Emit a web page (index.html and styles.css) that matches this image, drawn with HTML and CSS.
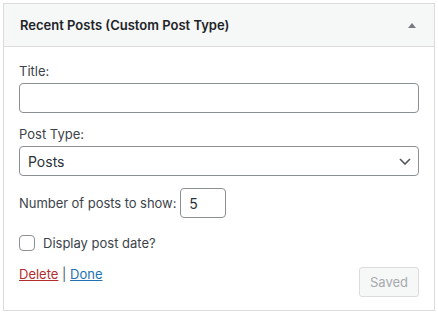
FILE: index.html
```html
<!DOCTYPE html>
<html lang="en">
<head>
    <meta charset="UTF-8">
    <meta name="viewport" content="width=device-width, initial-scale=1.0">
    <title>Recent Posts widget</title>
    <link rel="stylesheet" href="styles.css">
</head>
<body>
    <div class="widget">
        <div class="widget-top">
            <h3 class="widget-title">Recent Posts (Custom Post Type)</h3>
            <button class="widget-toggle" aria-label="Collapse">
                <svg width="8" height="5" viewBox="0 0 8 5"><polygon points="4,0 8,5 0,5" fill="#787c82"/></svg>
            </button>
        </div>

        <div class="widget-inside">
            <div class="field">
                <label for="title">Title:</label>
                <input type="text" id="title" class="text-input">
            </div>

            <div class="field">
                <label for="post-type">Post Type:</label>
                <div class="select-wrap">
                    <select id="post-type" class="select-input">
                        <option>Posts</option>
                        <option>Pages</option>
                    </select>
                    <svg class="chevron" width="12" height="7" viewBox="0 0 12 7"><polyline points="1,1 6,6 11,1" fill="none" stroke="#50575e" stroke-width="1.6"/></svg>
                </div>
            </div>

            <div class="field field-inline">
                <label for="number">Number of posts to show:</label>
                <input type="text" id="number" class="text-input small" value="5">
            </div>

            <div class="field field-check">
                <input type="checkbox" id="show-date" class="checkbox">
                <label for="show-date">Display post date?</label>
            </div>

            <div class="widget-actions">
                <div class="links">
                    <a href="#" class="delete">Delete</a> | <a href="#" class="done">Done</a>
                </div>
                <button class="button" disabled>Saved</button>
            </div>
        </div>
    </div>
</body>
</html>
```

FILE: styles.css
```css
body {
    margin: 0;
    padding: 3px;
    background: #fff;
    font-family: Inter, "Liberation Sans", sans-serif;
    font-size: 13px;
    color: #3c434a;
}

.widget {
    width: 432px;
    box-sizing: border-box;
    border: 1px solid #dcdcde;
    background: #fff;
}

.widget-top {
    height: 42px;
    background: #f6f7f7;
    border-bottom: 1px solid #dcdcde;
    display: flex;
    align-items: center;
    justify-content: space-between;
    padding: 0 15px 0 16px;
}

.widget-title {
    margin: 0;
    font-size: 13px;
    font-weight: 600;
    color: #1d2327;
    line-height: 1;
}

.widget-toggle {
    background: none;
    border: none;
    padding: 0;
    width: 12px;
    height: 12px;
    display: flex;
    align-items: center;
    justify-content: center;
    margin-right: 1px;
}

.widget-inside {
    padding: 15px 15px 13px;
}

.field {
    margin-bottom: 12px;
}

.field label {
    display: block;
    line-height: 18px;
    margin-bottom: 3px;
}

.text-input,
.select-input {
    display: block;
    width: 100%;
    height: 30px;
    box-sizing: border-box;
    border: 1px solid #8c8f94;
    border-radius: 4px;
    background: #fff;
    font-family: inherit;
    font-size: 13px;
    color: #2c3338;
    padding: 0 8px;
    margin: 0;
}

.select-wrap {
    position: relative;
}

.select-input {
    appearance: none;
    -webkit-appearance: none;
    font-size: 14px;
}

.chevron {
    position: absolute;
    right: 8px;
    top: 12px;
    pointer-events: none;
}

.field-inline {
    display: flex;
    align-items: center;
    gap: 4px;
    margin-bottom: 16px;
}

.field-inline label {
    margin: 0;
    letter-spacing: -0.05px;
}

.text-input.small {
    width: 46px;
    font-size: 14px;
}

.field-check {
    display: flex;
    align-items: center;
    gap: 8px;
    margin-bottom: 15px;
}

.field-check label {
    margin: 0;
    font-size: 13px;
}

.checkbox {
    appearance: none;
    -webkit-appearance: none;
    width: 16px;
    height: 16px;
    margin: 0;
    border: 1px solid #8c8f94;
    border-radius: 4px;
    background: #fff;
}

.widget-actions {
    display: flex;
    justify-content: space-between;
    align-items: flex-start;
}

.links {
    line-height: 15px;
    color: #50575e;
}

.links a {
    text-decoration: underline;
}

.delete {
    color: #b32d2e;
}

.done {
    color: #2271b1;
}

.button {
    height: 30px;
    padding: 0 10px;
    font-family: inherit;
    font-size: 13px;
    color: #a7aaad;
    background: #f6f7f7;
    border: 1px solid #dcdcde;
    border-radius: 3px;
}
```
